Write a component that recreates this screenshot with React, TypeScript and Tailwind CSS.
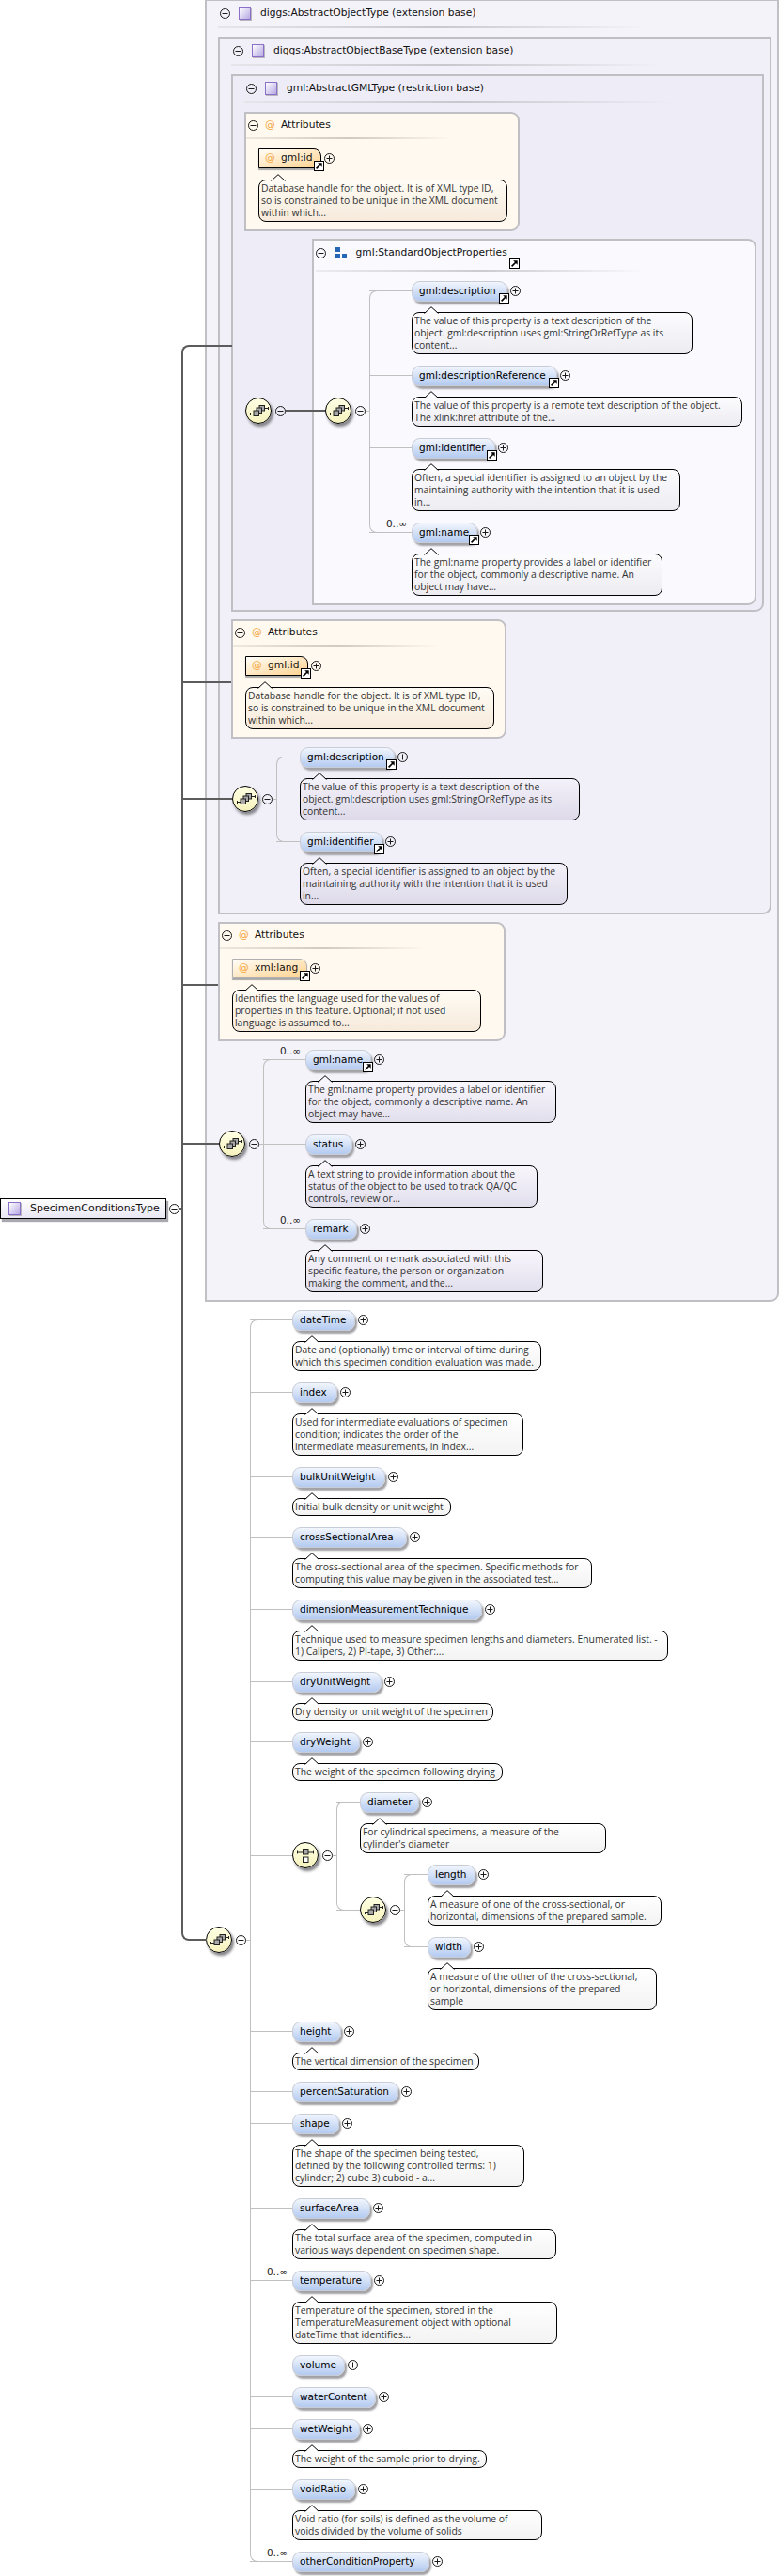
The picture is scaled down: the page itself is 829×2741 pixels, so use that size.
import React from "react";

const tints = {
  attr: "from-[#fffcf5] to-[#f6eadb]",
  sop: "from-[#fcfcff] to-[#ececf1]",
  lav: "from-[#f3f1f9] to-[#dedaea]",
  ext: "from-[#f8f6fc] to-[#e2dfed]",
  white: "from-[#ffffff] to-[#f3f3f3]",
};
const tipFill = { attr: "#fffcf5", sop: "#fcfcff", lav: "#f3f1f9", ext: "#f8f6fc", white: "#ffffff" };
type Tint = keyof typeof tints;

const Minus = ({ className = "" }: { className?: string }) => (
  <svg width="11" height="11" viewBox="0 0 11 11" className={`shrink-0 ${className}`}>
    <circle cx="5.5" cy="5.5" r="5" fill="none" stroke="#1a1a1a" strokeWidth="1" />
    <path d="M2.5 5.5H8.5" stroke="#1a1a1a" strokeWidth="1" />
  </svg>
);
const Plus = () => (
  <svg width="11" height="11" viewBox="0 0 11 11" className="shrink-0 ml-[2.5px] mt-[5px]">
    <circle cx="5.5" cy="5.5" r="5" fill="none" stroke="#1a1a1a" strokeWidth="1" />
    <path d="M2.5 5.5H8.5M5.5 2.5V8.5" stroke="#1a1a1a" strokeWidth="1" />
  </svg>
);
const RefBadge = ({ className }: { className: string }) => (
  <svg width="11" height="11" viewBox="0 0 11 11" className={`absolute ${className}`}>
    <rect x="0.5" y="0.5" width="10" height="10" fill="#fff" stroke="#000" />
    <path d="M2.6 8.4 L7 4" stroke="#000" strokeWidth="1.7" />
    <path d="M4.2 2.3 H8.7 V6.8 Z" fill="#000" />
  </svg>
);
const TypeIcon = () => (
  <div className="w-[13px] h-[14px] shrink-0 border-[1.5px] border-[#8a70c8] bg-linear-to-br from-[#ffffff] to-[#b7a8e2] shadow-[1px_1px_0_#b8b8bc]" />
);
const GroupIcon = () => (
  <svg width="13" height="13" viewBox="0 0 13 13" className="shrink-0">
    <rect x="0" y="0" width="5" height="5" fill="#2566b5" />
    <rect x="0" y="7" width="5" height="5" fill="#2566b5" />
    <rect x="7" y="7" width="5" height="5" fill="#2566b5" />
  </svg>
);

const Bubble = ({ lines, w, t }: { lines: string[]; w: string; t: Tint }) => (
  <div
    className={`relative mt-[11px] rounded-[8px] border border-black bg-linear-to-b px-[2px] py-[2px] whitespace-nowrap text-[10.4px] leading-[13px] text-[#333] [font-family:'Open_Sans',sans-serif] ${tints[t]} ${w}`}
  >
    <svg width="16" height="8" viewBox="0 0 16 8" className="absolute left-[12px] top-[-7px]">
      <path d="M0.5 8 L8 0.7 L15.5 8 Z" fill={tipFill[t]} />
      <path d="M0.5 7.5 L8 0.7 L15.5 7.5" fill="none" stroke="#000" strokeWidth="1" />
    </svg>
    {lines.map((l, i) => (
      <div key={i}>{l}</div>
    ))}
  </div>
);

function El({
  n, w, d, bw, t = "white", r, o, s = "w-[45px]",
}: { n: string; w: string; d?: string[]; bw?: string; t?: Tint; r?: boolean; o?: boolean; s?: string }) {
  return (
    <div className="flex">
      <div className={`relative shrink-0 ${s}`}>
        <div className="mt-[10px] h-px bg-[#c0c0c0]" />
        {o && <span className="absolute right-[5px] top-[-5px] text-[10.5px] leading-[13px] text-[#222]">0..∞</span>}
      </div>
      <div className="flex flex-col items-start">
        <div className="flex items-start">
          <div
            className={`relative h-[22px] shrink-0 rounded-[9px] border border-[#c8ccd6] bg-linear-to-b from-[#f2f6fd] to-[#b3caf0] pl-[7px] text-[10.5px] leading-[19px] text-black shadow-[2px_3px_2px_#a2a2a6] ${w}`}
          >
            {n}
            {r && <RefBadge className="right-[-3px] bottom-[-3px]" />}
          </div>
          <Plus />
        </div>
        {d && bw && <Bubble lines={d} w={bw} t={t} />}
      </div>
    </div>
  );
}

const Circle = ({ choice }: { choice?: boolean }) => (
  <div className="w-[28px] h-[28px] shrink-0 rounded-full border border-black bg-linear-to-b from-[#ffffe4] to-[#f6f2bd] shadow-[2px_3px_3px_#85858a]">
    {choice ? (
      <svg width="26" height="26" viewBox="0 0 26 26">
        <path d="M4 10H22" stroke="#222" />
        <path d="M4.5 8.5V11.5M21.5 8.5V11.5" stroke="#222" />
        <rect x="10.5" y="6.5" width="5.5" height="5.5" fill="#a8a8a8" stroke="#222" />
        <rect x="10.5" y="15" width="5.5" height="5.5" fill="#fff" stroke="#222" />
      </svg>
    ) : (
      <svg width="26" height="26" viewBox="0 0 26 26">
        <path d="M4.5 16.5H9M19 10.5H24" stroke="#222" />
        <path d="M4.5 15V18M23.5 9V12" stroke="#222" />
        <rect x="14" y="7.5" width="5.5" height="5.5" fill="#a8a8a8" stroke="#222" />
        <rect x="11" y="10" width="5.5" height="5.5" fill="#a8a8a8" stroke="#222" />
        <rect x="8" y="13" width="5.5" height="5.5" fill="#a8a8a8" stroke="#222" />
      </svg>
    )}
  </div>
);

function Seq({ nodeMt, lineH, choice, children }: { nodeMt: string; lineH: string; choice?: boolean; children: React.ReactNode }) {
  return (
    <div className="flex items-start">
      <div className={`flex items-center shrink-0 ${nodeMt}`}>
        <Circle choice={choice} />
        <Minus className="ml-[4px]" />
        <div className="w-[4px] h-px bg-[#c0c0c0]" />
      </div>
      <div className="relative flex flex-col gap-3">
        <div className={`absolute left-0 top-[10px] w-[14px] border border-r-0 border-[#c0c0c0] rounded-l-[8px] ${lineH}`} />
        {children}
      </div>
    </div>
  );
}

function AttrBox({ w, name, nameW, lines }: { w: string; name: string; nameW: string; lines: string[] }) {
  return (
    <div className={`shrink-0 rounded-tr-[9px] rounded-br-[9px] border-2 border-[#c0c0c4] bg-[#fff9ef] pb-[8px] ${w}`}>
      <div className="flex items-center h-[24px] text-[10.7px] text-[#111]">
        <Minus className="ml-[2px]" />
        <span className="ml-[7px] w-[13px] text-[#f4a438]">@</span>
        <span className="ml-[4px]">Attributes</span>
      </div>
      <div className="mt-[1px] h-[2px] w-[220px] bg-linear-to-r from-[#eee9df] via-[#cfcac2] to-transparent" />
      <div className="mt-[10px] pl-[13px] flex flex-col items-start">
        <div className="flex items-start h-[22px]">
          <div
            className={`relative flex items-center h-[21px] shrink-0 rounded-tr-[8px] border bg-linear-to-br from-[#fffdf8] to-[#ffd28c] text-[10.7px] text-[#111] shadow-[0_2px_1px_#a8a8a8] ${nameW}`}
          >
            <span className="ml-[6px] w-[13px] text-[#f4a438]">@</span>
            <span className="ml-[4px]">{name}</span>
            <RefBadge className="right-[-4px] bottom-[-4px]" />
          </div>
          <Plus />
        </div>
        <Bubble lines={lines} w="w-[265px]" t="attr" />
      </div>
    </div>
  );
}

function BoxHead({ title }: { title: string }) {
  return (
    <>
      <div className="flex items-center h-[26px] text-[10.7px] text-[#111]">
        <Minus className="ml-[2px]" />
        <div className="ml-[9px]"><TypeIcon /></div>
        <span className="ml-[10px]">{title}</span>
      </div>
      <div className="mt-[1px] mb-[9px] h-[2px] w-[458px] bg-linear-to-r from-[#e6e5ea] via-[#c8c8cc] to-transparent" />
    </>
  );
}

const idDoc = [
  "Database handle for the object. It is of XML type ID,",
  "so is constrained to be unique in the XML document",
  "within which...",
];
const descDoc = [
  "The value of this property is a text description of the",
  "object. gml:description uses gml:StringOrRefType as its",
  "content...",
];
const identDoc = [
  "Often, a special identifier is assigned to an object by the",
  "maintaining authority with the intention that it is used",
  "in...",
];
const nameDoc = [
  "The gml:name property provides a label or identifier",
  "for the object, commonly a descriptive name. An",
  "object may have...",
];

const trunkH = "absolute h-[2px] bg-[#5c5c5c]";

export default function App() {
  return (
    <div className="relative w-[829px] h-[2741px] overflow-hidden bg-white [font-family:'DejaVu_Sans',sans-serif]">
      {/* trunk connectors lying over the panels */}
      <div className="absolute z-10 left-[193px] top-[367px] h-[1698px] w-[12px] rounded-l-[8px] border-l-[2.5px] border-t-2 border-b-2 border-[#5c5c5c]" />
      <div className={`${trunkH} z-10 left-[200px] top-[725px] w-[46px]`} />
      <div className={`${trunkH} z-10 left-[200px] top-[849px] w-[47px]`} />
      <div className={`${trunkH} z-10 left-[200px] top-[1047px] w-[32px]`} />
      <div className={`${trunkH} z-10 left-[200px] top-[1216px] w-[33px]`} />
      <div className={`${trunkH} z-10 left-[200px] top-[367px] w-[47px]`} />
      <div className={`${trunkH} z-10 left-[200px] top-[2063px] w-[20px]`} />
      <div className={`${trunkH} z-10 left-[193px] top-[725px] w-[8px]`} />
      <div className={`${trunkH} z-10 left-[193px] top-[849px] w-[8px]`} />
      <div className={`${trunkH} z-10 left-[193px] top-[1047px] w-[8px]`} />
      <div className={`${trunkH} z-10 left-[193px] top-[1216px] w-[8px]`} />

      <div className="flex items-start">
        {/* root */}
        <div className="w-[218px] shrink-0 pt-[1275px]">
          <div className="flex items-center">
            <div className="flex items-center w-[177px] h-[22px] border border-black bg-linear-to-b from-[#ffffff] to-[#e9e8f4] text-[11px] text-[#111] shadow-[2px_3px_1px_#a8a8ae]">
              <div className="ml-[8px]"><TypeIcon /></div>
              <span className="ml-[10px]">SpecimenConditionsType</span>
            </div>
            <Minus className="ml-[3px]" />
            <div className="w-[4px] h-[2px] bg-[#5c5c5c]" />
          </div>
        </div>

        <div className="w-[611px] shrink-0">
          {/* diggs:AbstractObjectType */}
          <div className="-mt-px rounded-br-[9px] border-2 border-[#c0c0c4] bg-[#f5f3fa] pl-[12px] pr-[6px] pb-[8px]">
            <BoxHead title="diggs:AbstractObjectType (extension base)" />
            {/* diggs:AbstractObjectBaseType */}
            <div className="rounded-br-[9px] border-2 border-[#c0c0c4] bg-[#f1eff8] pl-[12px] pr-[6px] pb-[8px]">
              <BoxHead title="diggs:AbstractObjectBaseType (extension base)" />
              {/* gml:AbstractGMLType */}
              <div className="rounded-br-[9px] border-2 border-[#c0c0c4] bg-[#eeecf6] pl-[12px] pr-[6px] pb-[5px]">
                <BoxHead title="gml:AbstractGMLType (restriction base)" />
                <AttrBox w="w-[293px]" name="gml:id" nameW="w-[67px] border-black" lines={idDoc} />
                <div className="mt-[8px] flex items-start pl-px">
                  <div className="flex items-center shrink-0 mt-[169px]">
                    <Circle />
                    <Minus className="ml-[4px]" />
                    <div className="relative z-10 w-[42px] -mr-[14.5px] h-[2px] bg-[#5c5c5c]" />
                  </div>
                  {/* gml:StandardObjectProperties */}
                  <div className="flex-1 rounded-tr-[9px] rounded-br-[9px] border-2 border-[#c0c0c4] bg-[#f9f9fe] pb-[8px]">
                    <div className="relative flex items-center h-[26px] text-[10.7px] text-[#111]">
                      <Minus className="ml-[2px]" />
                      <div className="ml-[10px]"><GroupIcon /></div>
                      <span className="ml-[9px]">gml:StandardObjectProperties</span>
                      <RefBadge className="left-[208px] top-[19px]" />
                    </div>
                    <div className="mt-[5px] mb-[10px] h-[2px] w-[352px] ml-[2px] bg-linear-to-r from-[#ecebf0] via-[#ccccd0] to-transparent" />
                    <div className="pl-[12.5px]">
                      <Seq nodeMt="mt-[124px]" lineH="h-[258px]">
                        <El n="gml:description" w="w-[102px]" r t="sop" bw="w-[299px]" d={descDoc} />
                        <El n="gml:descriptionReference" w="w-[155px]" r t="sop" bw="w-[352px]" d={[
                          "The value of this property is a remote text description of the object.",
                          "The xlink:href attribute of the...",
                        ]} />
                        <El n="gml:identifier" w="w-[89px]" r t="sop" bw="w-[286px]" d={identDoc} />
                        <El n="gml:name" w="w-[70px]" r o t="sop" bw="w-[267px]" d={nameDoc} />
                      </Seq>
                    </div>
                  </div>
                </div>
              </div>
              <div className="mt-[8px]">
                <AttrBox w="w-[293px]" name="gml:id" nameW="w-[67px] border-black" lines={idDoc} />
              </div>
              <div className="mt-[9px] pl-px">
                <Seq nodeMt="mt-[41px]" lineH="h-[91px]">
                  <El n="gml:description" w="w-[101px]" r s="w-[25px]" t="lav" bw="w-[298px]" d={descDoc} />
                  <El n="gml:identifier" w="w-[88px]" r s="w-[25px]" t="lav" bw="w-[285px]" d={identDoc} />
                </Seq>
              </div>
            </div>
            <div className="mt-[8px]">
              <AttrBox
                w="w-[306px]"
                name="xml:lang"
                nameW="w-[80px] border-[#b0b0b0]"
                lines={[
                  "Identifies the language used for the values of",
                  "properties in this feature. Optional; if not used",
                  "language is assumed to...",
                ]}
              />
            </div>
            <div className="mt-[9px] pl-px">
              <Seq nodeMt="mt-[86px]" lineH="h-[181px]">
                <El n="gml:name" w="w-[70px]" r o t="ext" bw="w-[267px]" d={nameDoc} />
                <El n="status" w="w-[50px]" t="ext" bw="w-[247px]" d={[
                  "A text string to provide information about the",
                  "status of the object to be used to track QA/QC",
                  "controls, review or...",
                ]} />
                <El n="remark" w="w-[55px]" o t="ext" bw="w-[253px]" d={[
                  "Any comment or remark associated with this",
                  "specific feature, the person or organization",
                  "making the comment, and the...",
                ]} />
              </Seq>
            </div>
          </div>

          {/* local elements of the type */}
          <div className="mt-[9px] pl-px">
            <Seq nodeMt="mt-[656px]" lineH="h-[1322px]">
              <El n="dateTime" w="w-[67px]" bw="w-[265px]" d={[
                "Date and (optionally) time or interval of time during",
                "which this specimen condition evaluation was made.",
              ]} />
              <El n="index" w="w-[48px]" bw="w-[246px]" d={[
                "Used for intermediate evaluations of specimen",
                "condition; indicates the order of the",
                "intermediate measurements, in index...",
              ]} />
              <El n="bulkUnitWeight" w="w-[99px]" bw="w-[169px]" d={["Initial bulk density or unit weight"]} />
              <El n="crossSectionalArea" w="w-[122px]" bw="w-[319px]" d={[
                "The cross-sectional area of the specimen. Specific methods for",
                "computing this value may be given in the associated test...",
              ]} />
              <El n="dimensionMeasurementTechnique" w="w-[202px]" bw="w-[400px]" d={[
                "Technique used to measure specimen lengths and diameters. Enumerated list. -",
                "1) Calipers, 2) PI-tape, 3) Other:...",
              ]} />
              <El n="dryUnitWeight" w="w-[95px]" bw="w-[214px]" d={["Dry density or unit weight of the specimen"]} />
              <El n="dryWeight" w="w-[72px]" bw="w-[224px]" d={["The weight of the specimen following drying"]} />
              <div className="flex">
                <div className="w-[45px] shrink-0">
                  <div className="mt-[67px] h-px bg-[#c0c0c0]" />
                </div>
                <Seq choice nodeMt="mt-[53px]" lineH="h-[116px]">
                  <El n="diameter" w="w-[63px]" s="w-[25px]" bw="w-[262px]" d={[
                    "For cylindrical specimens, a measure of the",
                    "cylinder's diameter",
                  ]} />
                  <div className="flex">
                    <div className="w-[25px] shrink-0">
                      <div className="mt-[48px] h-px bg-[#c0c0c0]" />
                    </div>
                    <Seq nodeMt="mt-[34px]" lineH="h-[78px]">
                      <El n="length" w="w-[51px]" s="w-[25px]" bw="w-[249px]" d={[
                        "A measure of one of the cross-sectional, or",
                        "horizontal, dimensions of the prepared sample.",
                      ]} />
                      <El n="width" w="w-[46px]" s="w-[25px]" bw="w-[244px]" d={[
                        "A measure of the other of the cross-sectional,",
                        "or horizontal, dimensions of the prepared",
                        "sample",
                      ]} />
                    </Seq>
                  </div>
                </Seq>
              </div>
              <El n="height" w="w-[52px]" bw="w-[199px]" d={["The vertical dimension of the specimen"]} />
              <El n="percentSaturation" w="w-[113px]" />
              <El n="shape" w="w-[50px]" bw="w-[247px]" d={[
                "The shape of the specimen being tested,",
                "defined by the following controlled terms: 1)",
                "cylinder; 2) cube 3) cuboid - a...",
              ]} />
              <El n="surfaceArea" w="w-[83px]" bw="w-[281px]" d={[
                "The total surface area of the specimen, computed in",
                "various ways dependent on specimen shape.",
              ]} />
              <El n="temperature" w="w-[84px]" o bw="w-[282px]" d={[
                "Temperature of the specimen, stored in the",
                "TemperatureMeasurement object with optional",
                "dateTime that identifies...",
              ]} />
              <El n="volume" w="w-[56px]" />
              <El n="waterContent" w="w-[89px]" />
              <El n="wetWeight" w="w-[72px]" bw="w-[207px]" d={["The weight of the sample prior to drying."]} />
              <El n="voidRatio" w="w-[67px]" bw="w-[266px]" d={[
                "Void ratio (for soils) is defined as the volume of",
                "voids divided by the volume of solids",
              ]} />
              <El n="otherConditionProperty" w="w-[146px]" o />
            </Seq>
          </div>
        </div>
      </div>
    </div>
  );
}
